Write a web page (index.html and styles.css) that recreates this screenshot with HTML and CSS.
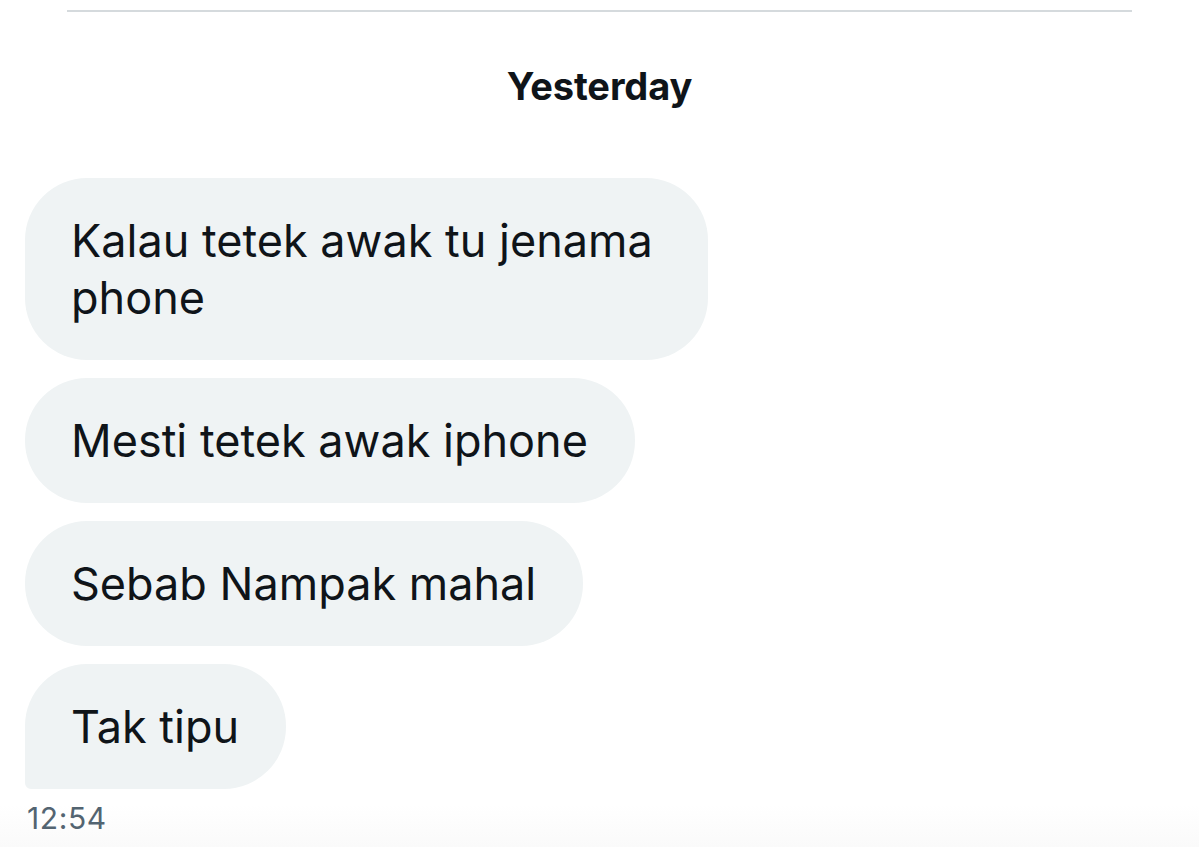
FILE: index.html
```html
<!DOCTYPE html>
<html lang="ms">
<head>
<meta charset="utf-8">
<title>Messages</title>
<link rel="stylesheet" href="styles.css">
</head>
<body>
<div class="conversation">
  <div class="divider"></div>
  <div class="date-header">Yesterday</div>
  <div class="messages">
    <div class="bubble">Kalau tetek awak tu jenama phone</div>
    <div class="bubble">Mesti tetek awak iphone</div>
    <div class="bubble">Sebab Nampak mahal</div>
    <div class="bubble last">Tak tipu</div>
  </div>
  <div class="timestamp">12:54</div>
</div>
</body>
</html>
```
FILE: styles.css
```css
html, body {
  margin: 0;
  padding: 0;
  background: #ffffff;
}

body {
  font-family: Inter, "Noto Sans", "Liberation Sans", sans-serif;
  color: #0f1419;
  height: 847px;
  overflow: hidden;
}

.conversation {
  display: flex;
  flex-direction: column;
  height: 847px;
  background: linear-gradient(to bottom, #ffffff 0, #ffffff 805px, #fafafa 847px);
}

.divider {
  margin: 10px 67px 0 67px;
  height: 2px;
  background: #d5dadd;
}

.date-header {
  margin-top: 51px;
  font-size: 38px;
  line-height: 46px;
  font-weight: 700;
  text-align: center;
  letter-spacing: -0.1px;
}

.messages {
  margin-top: 69px;
  padding-left: 25px;
  display: flex;
  flex-direction: column;
  align-items: flex-start;
  gap: 18px;
}

.bubble {
  box-sizing: border-box;
  max-width: 683px;
  background: #eff3f4;
  border-radius: 62px;
  padding: 34px 47px 34px 46px;
  font-size: 45px;
  line-height: 57px;
}

.bubble.last {
  border-bottom-left-radius: 6px;
}

.timestamp {
  margin-top: 12px;
  padding-left: 27px;
  font-size: 30px;
  line-height: 34px;
  letter-spacing: 0.6px;
  color: #536471;
}
```
